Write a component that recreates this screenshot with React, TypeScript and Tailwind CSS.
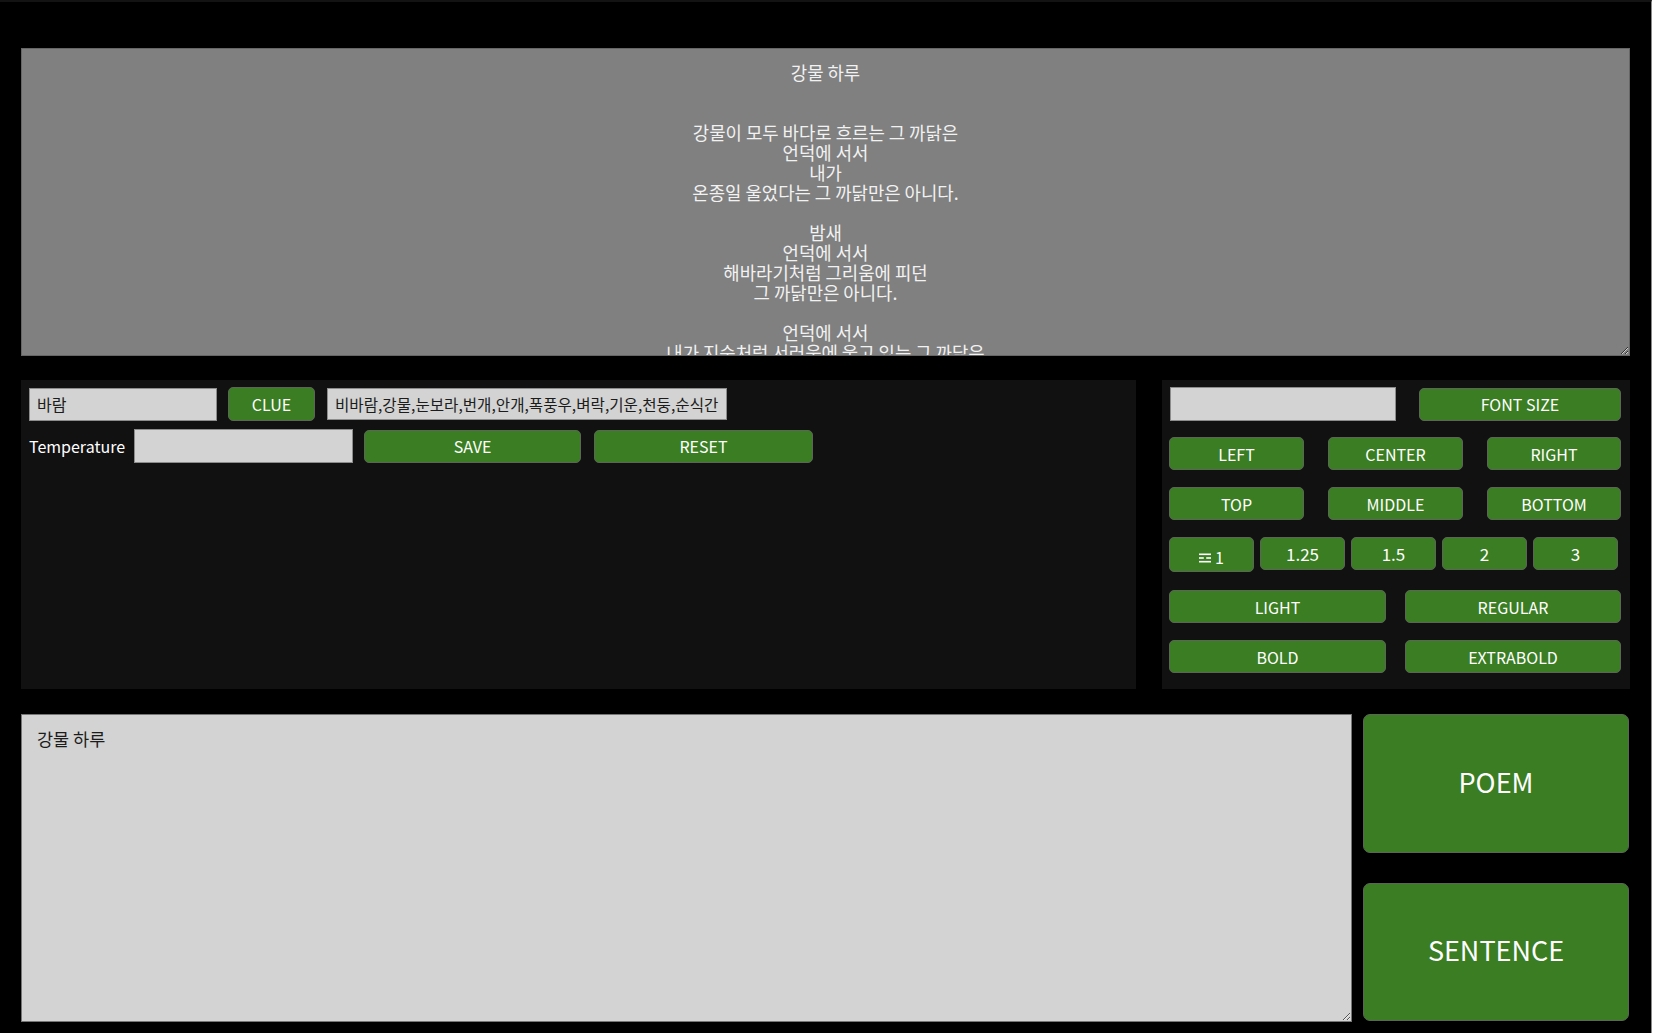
import React from "react";

const FONT = { fontFamily: '"Noto Sans CJK KR", "Noto Sans", sans-serif' };

const poem = [
  "강물 하루",
  "",
  "",
  "강물이 모두 바다로 흐르는 그 까닭은",
  "언덕에 서서",
  "내가",
  "온종일 울었다는 그 까닭만은 아니다.",
  "",
  "밤새",
  "언덕에 서서",
  "해바라기처럼 그리움에 피던",
  "그 까닭만은 아니다.",
  "",
  "언덕에 서서",
  "내가 지순처럼 서러움에 울고 있는 그 까닭은",
  "",
  "강물이 모두 바다로 흐르는 그 까닭은",
].join("\n");

function Btn({ children, className = "" }: { children: React.ReactNode; className?: string }) {
  return (
    <button
      type="button"
      className={
        "flex items-center justify-center bg-[#3a7d22] text-white rounded-[5px] border border-[#5b6656] text-[16px] leading-none shrink-0 " +
        className
      }
      style={FONT}
    >
      {children}
    </button>
  );
}

function Field({ value = "", className = "" }: { value?: string; className?: string }) {
  return (
    <input
      readOnly
      value={value}
      className={
        "bg-[#d3d3d3] border border-[#8c8c8c] text-[#1c1c1c] px-[7px] outline-none shrink-0 " + className
      }
      style={FONT}
    />
  );
}

function LineIcon() {
  return (
    <svg width="12" height="10" viewBox="0 0 12 10" className="mr-[4px] mt-[3px]">
      <rect x="0" y="0.5" width="12" height="1.6" fill="white" />
      <rect x="0" y="4.2" width="4.8" height="1.6" fill="white" />
      <rect x="7.2" y="4.2" width="4.8" height="1.6" fill="white" />
      <rect x="0" y="7.9" width="12" height="1.6" fill="white" />
    </svg>
  );
}

export default function App() {
  return (
    <div
      className="w-[1652px] h-[1033px] bg-black border-r border-r-[#8a8a8a] border-t-2 border-t-[#131313] flex flex-col pt-[46px] pl-[21px] pr-[21px]"
      style={FONT}
    >
      <textarea
        readOnly
        defaultValue={poem}
        className="w-full h-[308px] shrink-0 bg-[#808080] border border-[#666666] text-[#f2f2f2] text-center text-[17.8px] leading-[20px] pt-[13px] px-[8px] overflow-hidden outline-none"
        style={FONT}
      />

      <div className="flex gap-[26px] mt-[24px] h-[309px] shrink-0">
        <div className="w-[1115px] bg-[#111111] pt-[7px] pl-[8px] flex flex-col gap-[8px]">
          <div className="flex items-center">
            <Field value="바람" className="w-[188px] h-[33px] text-[16px]" />
            <Btn className="ml-[11px] w-[87px] h-[34px]">CLUE</Btn>
            <Field
              value="비바람,강물,눈보라,번개,안개,폭풍우,벼락,기운,천둥,순식간"
              className="ml-[12px] w-[400px] h-[32px] text-[15.6px]"
            />
          </div>
          <div className="flex items-center">
            <span className="w-[105px] text-white text-[16px]">Temperature</span>
            <Field className="w-[219px] h-[34px] text-[16px]" />
            <Btn className="ml-[11px] w-[217px] h-[33px]">SAVE</Btn>
            <Btn className="ml-[13px] w-[219px] h-[33px]">RESET</Btn>
          </div>
        </div>

        <div className="w-[468px] bg-[#111111] pt-[7px] pl-[7px] flex flex-col">
          <div className="flex items-center">
            <Field className="ml-[1px] w-[226px] h-[34px] text-[16px]" />
            <Btn className="ml-[23px] w-[202px] h-[33px]">FONT SIZE</Btn>
          </div>
          <div className="flex gap-[24px] mt-[16px]">
            <Btn className="w-[135px] h-[33px]">LEFT</Btn>
            <Btn className="w-[135px] h-[33px]">CENTER</Btn>
            <Btn className="w-[134px] h-[33px]">RIGHT</Btn>
          </div>
          <div className="flex gap-[24px] mt-[17px]">
            <Btn className="w-[135px] h-[33px]">TOP</Btn>
            <Btn className="w-[135px] h-[33px]">MIDDLE</Btn>
            <Btn className="w-[134px] h-[33px]">BOTTOM</Btn>
          </div>
          <div className="flex items-start gap-[6px] mt-[17px]">
            <Btn className="w-[85px] h-[35px] pt-[4px]">
              <LineIcon />
              <span>1</span>
            </Btn>
            <Btn className="w-[85px] h-[33px] text-[17px]">1.25</Btn>
            <Btn className="w-[85px] h-[33px] text-[17px]">1.5</Btn>
            <Btn className="w-[85px] h-[33px] text-[17px]">2</Btn>
            <Btn className="w-[85px] h-[33px] text-[17px]">3</Btn>
          </div>
          <div className="flex gap-[19px] mt-[18px]">
            <Btn className="w-[217px] h-[33px]">LIGHT</Btn>
            <Btn className="w-[216px] h-[33px]">REGULAR</Btn>
          </div>
          <div className="flex gap-[19px] mt-[17px]">
            <Btn className="w-[217px] h-[33px]">BOLD</Btn>
            <Btn className="w-[216px] h-[33px]">EXTRABOLD</Btn>
          </div>
        </div>
      </div>

      <div className="flex gap-[11px] mt-[25px] h-[308px] shrink-0">
        <textarea
          readOnly
          defaultValue="강물 하루"
          className="w-[1331px] h-full bg-[#d3d3d3] border border-[#767676] text-[#1c1c1c] text-[17.5px] leading-[24px] pt-[12px] px-[15px] overflow-hidden outline-none"
          style={FONT}
        />
        <div className="w-[266px] flex flex-col gap-[30px]">
          <Btn className="w-full h-[139px] rounded-[7px] text-[27px] pb-[5px]">POEM</Btn>
          <Btn className="w-full h-[138px] rounded-[7px] text-[27px] pb-[5px]">SENTENCE</Btn>
        </div>
      </div>
    </div>
  );
}
